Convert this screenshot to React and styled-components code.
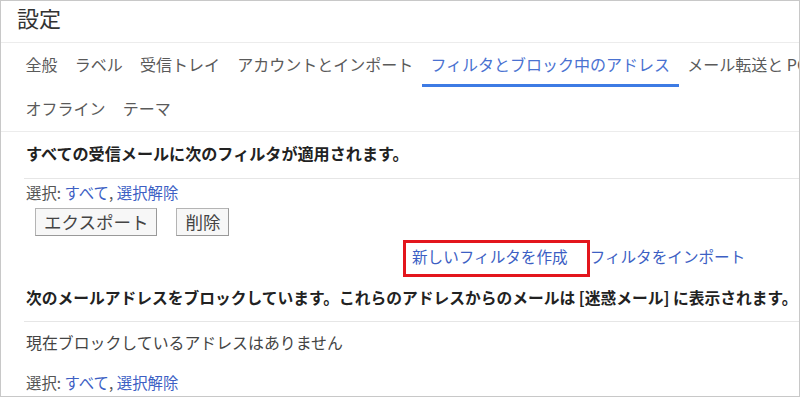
import React from 'react'
import styled, { createGlobalStyle } from 'styled-components'

const GlobalStyle = createGlobalStyle`
  html, body {
    margin: 0;
    padding: 0;
    background: #fff;
  }
  body {
    font-family: "Noto Sans CJK JP", "Noto Sans", sans-serif;
  }
`

const Frame = styled.div`
  width: 800px;
  height: 397px;
  box-sizing: border-box;
  border: 1px solid #c8c8c8;
  overflow: hidden;
  background: #fff;
  color: #444;
`

const Header = styled.div`
  height: 41px;
  padding-left: 16px;
  border-bottom: 1px solid #ececec;
  display: flex;
  align-items: flex-start;
`

const Title = styled.h1`
  margin: 0;
  font-size: 22px;
  font-weight: 400;
  line-height: 32px;
  color: #333;
`

const Tabs = styled.nav`
  padding-left: 16px;
  border-bottom: 1px solid #ececec;
`

const TabRow = styled.div`
  display: flex;
  white-space: nowrap;
`

const Tab = styled.div`
  height: 44px;
  box-sizing: border-box;
  padding: 2px 8.6px 0;
  line-height: 39px;
  font-size: 16px;
  color: ${p => (p.$active ? '#4a72d1' : '#5a5a5a')};
  border-bottom: 3px solid ${p => (p.$active ? '#3d7be4' : 'transparent')};
  flex-shrink: 0;
`

const Section = styled.div`
  padding-left: 25px;
`

const Heading = styled.div`
  margin-left: -2px;
  padding: ${p => p.$top}px 0 ${p => p.$bottom}px 2px;
  border-bottom: 1px solid #e6e6e6;
  font-size: ${p => p.$size}px;
  font-weight: 700;
  line-height: 23px;
  color: #222;
  white-space: nowrap;
`

const SelectLine = styled.div`
  margin-top: ${p => p.$top}px;
  font-size: 15.4px;
  line-height: 20px;
  color: #555;
`

const Link = styled.a`
  color: #3d5fc4;
  text-decoration: none;
  cursor: pointer;
`

const Buttons = styled.div`
  display: flex;
  gap: 19px;
  margin: 6px 0 0 9px;
`

const Button = styled.button`
  height: 28px;
  box-sizing: border-box;
  padding: 0 8px;
  border: 1px solid #b4b4b4;
  border-right-color: #999;
  border-bottom-color: #999;
  background: #f7f7f7;
  font-family: inherit;
  font-size: 17.5px;
  line-height: 24px;
  color: #444;
`

const LinkRow = styled.div`
  display: flex;
  align-items: flex-start;
  margin: 4px 0 0 377px;
  font-size: 15.6px;
  line-height: 26px;
`

const Highlight = styled.span`
  display: inline-block;
  border: 3px solid #e3161d;
  padding: 0 19px 5px 6px;
`

const Plain = styled.span`
  padding-top: 3px;
`

const Empty = styled.div`
  padding-top: 10px;
  font-size: 15.9px;
  line-height: 22px;
  color: #444;
`

const SelectControls = () => (
  <>
    選択: <Link>すべて</Link>, <Link>選択解除</Link>
  </>
)

const App = () => {
  const rowOne = ['全般', 'ラベル', '受信トレイ', 'アカウントとインポート', 'フィルタとブロック中のアドレス', 'メール転送と POP/IMAP']
  const rowTwo = ['オフライン', 'テーマ']
  return (
    <>
      <GlobalStyle />
      <Frame>
        <Header>
          <Title>設定</Title>
        </Header>
        <Tabs>
          <TabRow>
            {rowOne.map(t => (
              <Tab key={t} $active={t === 'フィルタとブロック中のアドレス'}>{t}</Tab>
            ))}
          </TabRow>
          <TabRow>
            {rowTwo.map(t => (
              <Tab key={t}>{t}</Tab>
            ))}
          </TabRow>
        </Tabs>
        <Section>
          <Heading $top={10} $bottom={13} $size={16.1}>すべての受信メールに次のフィルタが適用されます。</Heading>
          <SelectLine $top={3}>
            <SelectControls />
          </SelectLine>
          <Buttons>
            <Button>エクスポート</Button>
            <Button>削除</Button>
          </Buttons>
          <LinkRow>
            <Highlight>
              <Link>新しいフィルタを作成</Link>
            </Highlight>
            <Plain>
              <Link>フィルタをインポート</Link>
            </Plain>
          </LinkRow>
          <Heading $top={9} $bottom={12} $size={15.75}>
            次のメールアドレスをブロックしています。これらのアドレスからのメールは [迷惑メール] に表示されます。
          </Heading>
          <Empty>現在ブロックしているアドレスはありません</Empty>
          <SelectLine $top={18}>
            <SelectControls />
          </SelectLine>
        </Section>
      </Frame>
    </>
  )
}

export default App
